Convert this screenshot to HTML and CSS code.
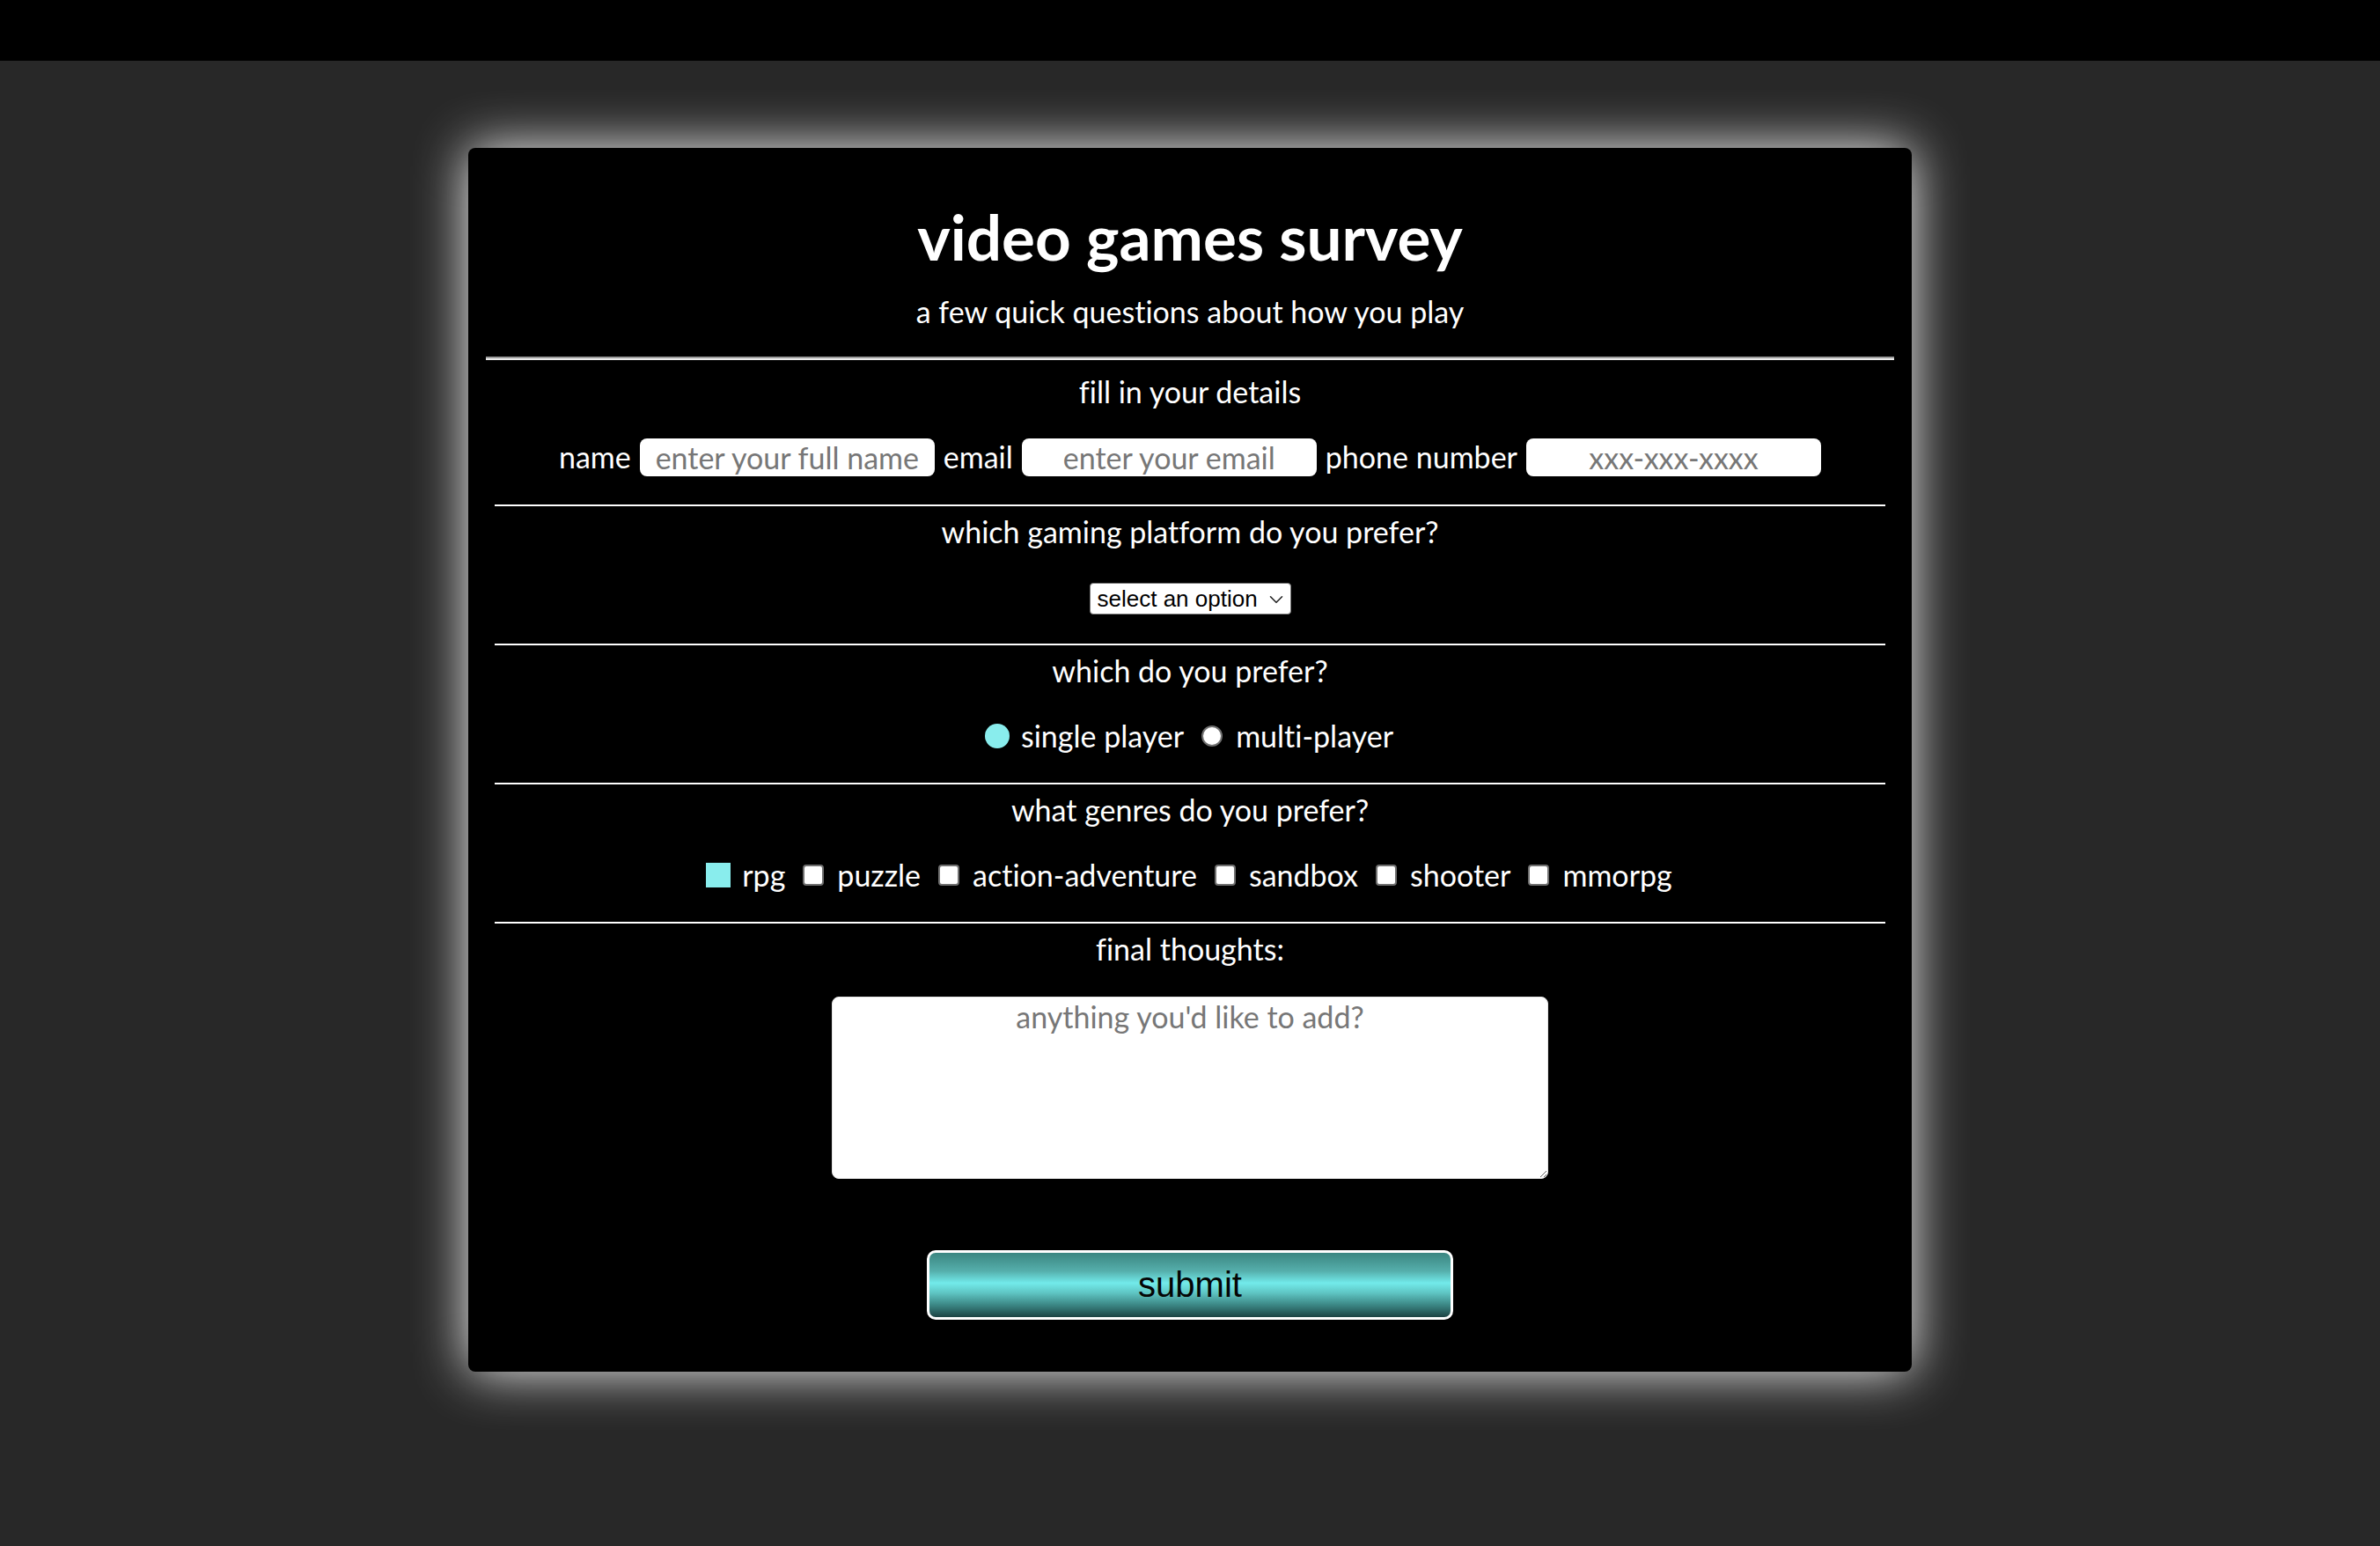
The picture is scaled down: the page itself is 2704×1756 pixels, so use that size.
FILE: index.html
```html
<!DOCTYPE html>
<html lang="en">
<head>
<meta charset="utf-8">
<title>video games survey</title>
<link rel="stylesheet" href="styles.css">
</head>
<body>
<div class="topbar"></div>
<main class="page">
  <form class="card">
    <header class="head">
      <h1 class="title">video games survey</h1>
      <p class="subtitle">a few quick questions about how you play</p>
    </header>
    <hr class="divider">

    <section class="sec sec-first">
      <p class="q">fill in your details</p>
      <div class="row">
        <label class="lbl" for="name">name</label>
        <input class="field" id="name" type="text" placeholder="enter your full name">
        <label class="lbl" for="email">email</label>
        <input class="field" id="email" type="email" placeholder="enter your email">
        <label class="lbl" for="phone">phone number</label>
        <input class="field" id="phone" type="tel" placeholder="xxx-xxx-xxxx">
      </div>
    </section>

    <section class="sec">
      <p class="q">which gaming platform do you prefer?</p>
      <div class="row">
        <span class="pickwrap">
          <select class="pick">
            <option>select an option</option>
            <option>pc</option>
            <option>console</option>
            <option>mobile</option>
          </select>
          <svg class="chev" width="16" height="10" viewBox="0 0 16 10" aria-hidden="true"><path d="M1.5 1.8 L8 8.2 L14.5 1.8" fill="none" stroke="#222" stroke-width="1.6" stroke-linecap="round" stroke-linejoin="round"/></svg>
        </span>
      </div>
    </section>

    <section class="sec">
      <p class="q">which do you prefer?</p>
      <div class="row opts">
        <label class="opt"><input class="radio" type="radio" name="mode" checked><span>single player</span></label>
        <label class="opt"><input class="radio" type="radio" name="mode"><span>multi-player</span></label>
      </div>
    </section>

    <section class="sec">
      <p class="q">what genres do you prefer?</p>
      <div class="row opts">
        <label class="opt"><input class="check" type="checkbox" checked><span>rpg</span></label>
        <label class="opt"><input class="check" type="checkbox"><span>puzzle</span></label>
        <label class="opt"><input class="check" type="checkbox"><span>action-adventure</span></label>
        <label class="opt"><input class="check" type="checkbox"><span>sandbox</span></label>
        <label class="opt"><input class="check" type="checkbox"><span>shooter</span></label>
        <label class="opt"><input class="check" type="checkbox"><span>mmorpg</span></label>
      </div>
    </section>

    <section class="sec sec-last">
      <p class="q">final thoughts:</p>
      <textarea class="notes" placeholder="anything you'd like to add?"></textarea>
      <button class="submit" type="button">submit</button>
    </section>
  </form>
</main>
</body>
</html>
```

FILE: styles.css
```css
* { box-sizing: border-box; }

html, body {
  margin: 0;
  padding: 0;
}

body {
  background: #282828;
  color: #fff;
  font-family: Lato, "Noto Sans", sans-serif;
  font-size: 34px;
  font-variant-ligatures: none;
  min-height: 1756px;
}

.topbar {
  height: 69px;
  background: #000;
}

.page {
  padding-top: 99px;
}

.card {
  width: 1640px;
  margin: 0 auto;
  background: #000;
  border-radius: 8px;
  padding: 0 20px 0;
  box-shadow: 0 0 60px rgba(255, 255, 255, 0.95);
}

.head {
  text-align: center;
}

.title {
  margin: 0;
  padding-top: 60px;
  font-size: 71px;
  line-height: 82px;
  font-weight: 700;
}

.subtitle {
  margin: 24px 0 0;
  line-height: 40px;
}

.divider {
  margin: 31px 0 0;
  height: 0;
  border: 0;
  border-top: 2px solid #9c9c9c;
  border-bottom: 2px solid #ececec;
}

.sec {
  margin: 0 10px;
  padding: 9px 0 33px;
  border-bottom: 2px solid #fff;
  text-align: center;
}

.sec-first {
  padding-top: 16px;
  padding-bottom: 34px;
}

.sec-last {
  border-bottom: 0;
  padding-bottom: 59px;
}

.q {
  margin: 0 0 34px;
  line-height: 40px;
}

.row {
  height: 40px;
  display: flex;
  justify-content: center;
  align-items: center;
  gap: 10px;
  line-height: 40px;
}

.lbl {
  white-space: nowrap;
}

.field {
  width: 335px;
  height: 43px;
  flex: none;
  border: 0;
  border-radius: 8px;
  background: #fff;
  padding: 0 10px;
  font-family: Lato, "Noto Sans", sans-serif;
  font-size: 34px;
  font-variant-ligatures: none;
  text-align: center;
  color: #222;
}

.field::placeholder,
.notes::placeholder {
  color: #777;
}

.pickwrap {
  position: relative;
  display: inline-flex;
  margin-top: 3px;
}

.pick {
  appearance: none;
  -webkit-appearance: none;
  width: 229px;
  height: 36px;
  font-family: "Liberation Sans", Arial, sans-serif;
  font-size: 26px;
  line-height: 34px;
  color: #000;
  background-color: #fff;
  border: 1px solid #767676;
  border-radius: 4px;
  padding: 0 30px 0 8px;
}

.chev {
  position: absolute;
  right: 9px;
  top: 14px;
  pointer-events: none;
}

.opts {
  gap: 20px;
}

.opt {
  display: flex;
  align-items: center;
  gap: 15px;
  white-space: nowrap;
}

.radio,
.check {
  appearance: none;
  -webkit-appearance: none;
  margin: 0;
  width: 24px;
  height: 24px;
  flex: none;
  background: #fff;
  border: 2px solid #707070;
}

.radio {
  border-radius: 50%;
}

.check {
  border-radius: 4px;
}

.radio:checked,
.check:checked {
  width: 28px;
  height: 28px;
  margin: -2px;
  border: 0;
  background: #89eded;
}

.check:checked {
  border-radius: 0;
}

.notes {
  display: block;
  width: 814px;
  height: 207px;
  margin: 33px auto 0;
  border: 1px solid #e6e6e6;
  border-radius: 8px;
  background: #fff;
  padding: 1px 2px;
  font-family: Lato, "Noto Sans", sans-serif;
  font-size: 34px;
  font-variant-ligatures: none;
  text-align: center;
  color: #222;
  resize: both;
}

.submit {
  display: block;
  width: 598px;
  height: 79px;
  margin: 81px auto 0;
  border: 3px solid #fff;
  border-radius: 10px;
  background: linear-gradient(to bottom,
    #3b8681 0%,
    #55aeab 28%,
    #72eaea 47%,
    #5fc6c4 62%,
    #3a8482 82%,
    #1d4343 100%);
  font-family: "Liberation Sans", Arial, sans-serif;
  font-size: 40px;
  color: #050505;
  padding: 0;
}
```
